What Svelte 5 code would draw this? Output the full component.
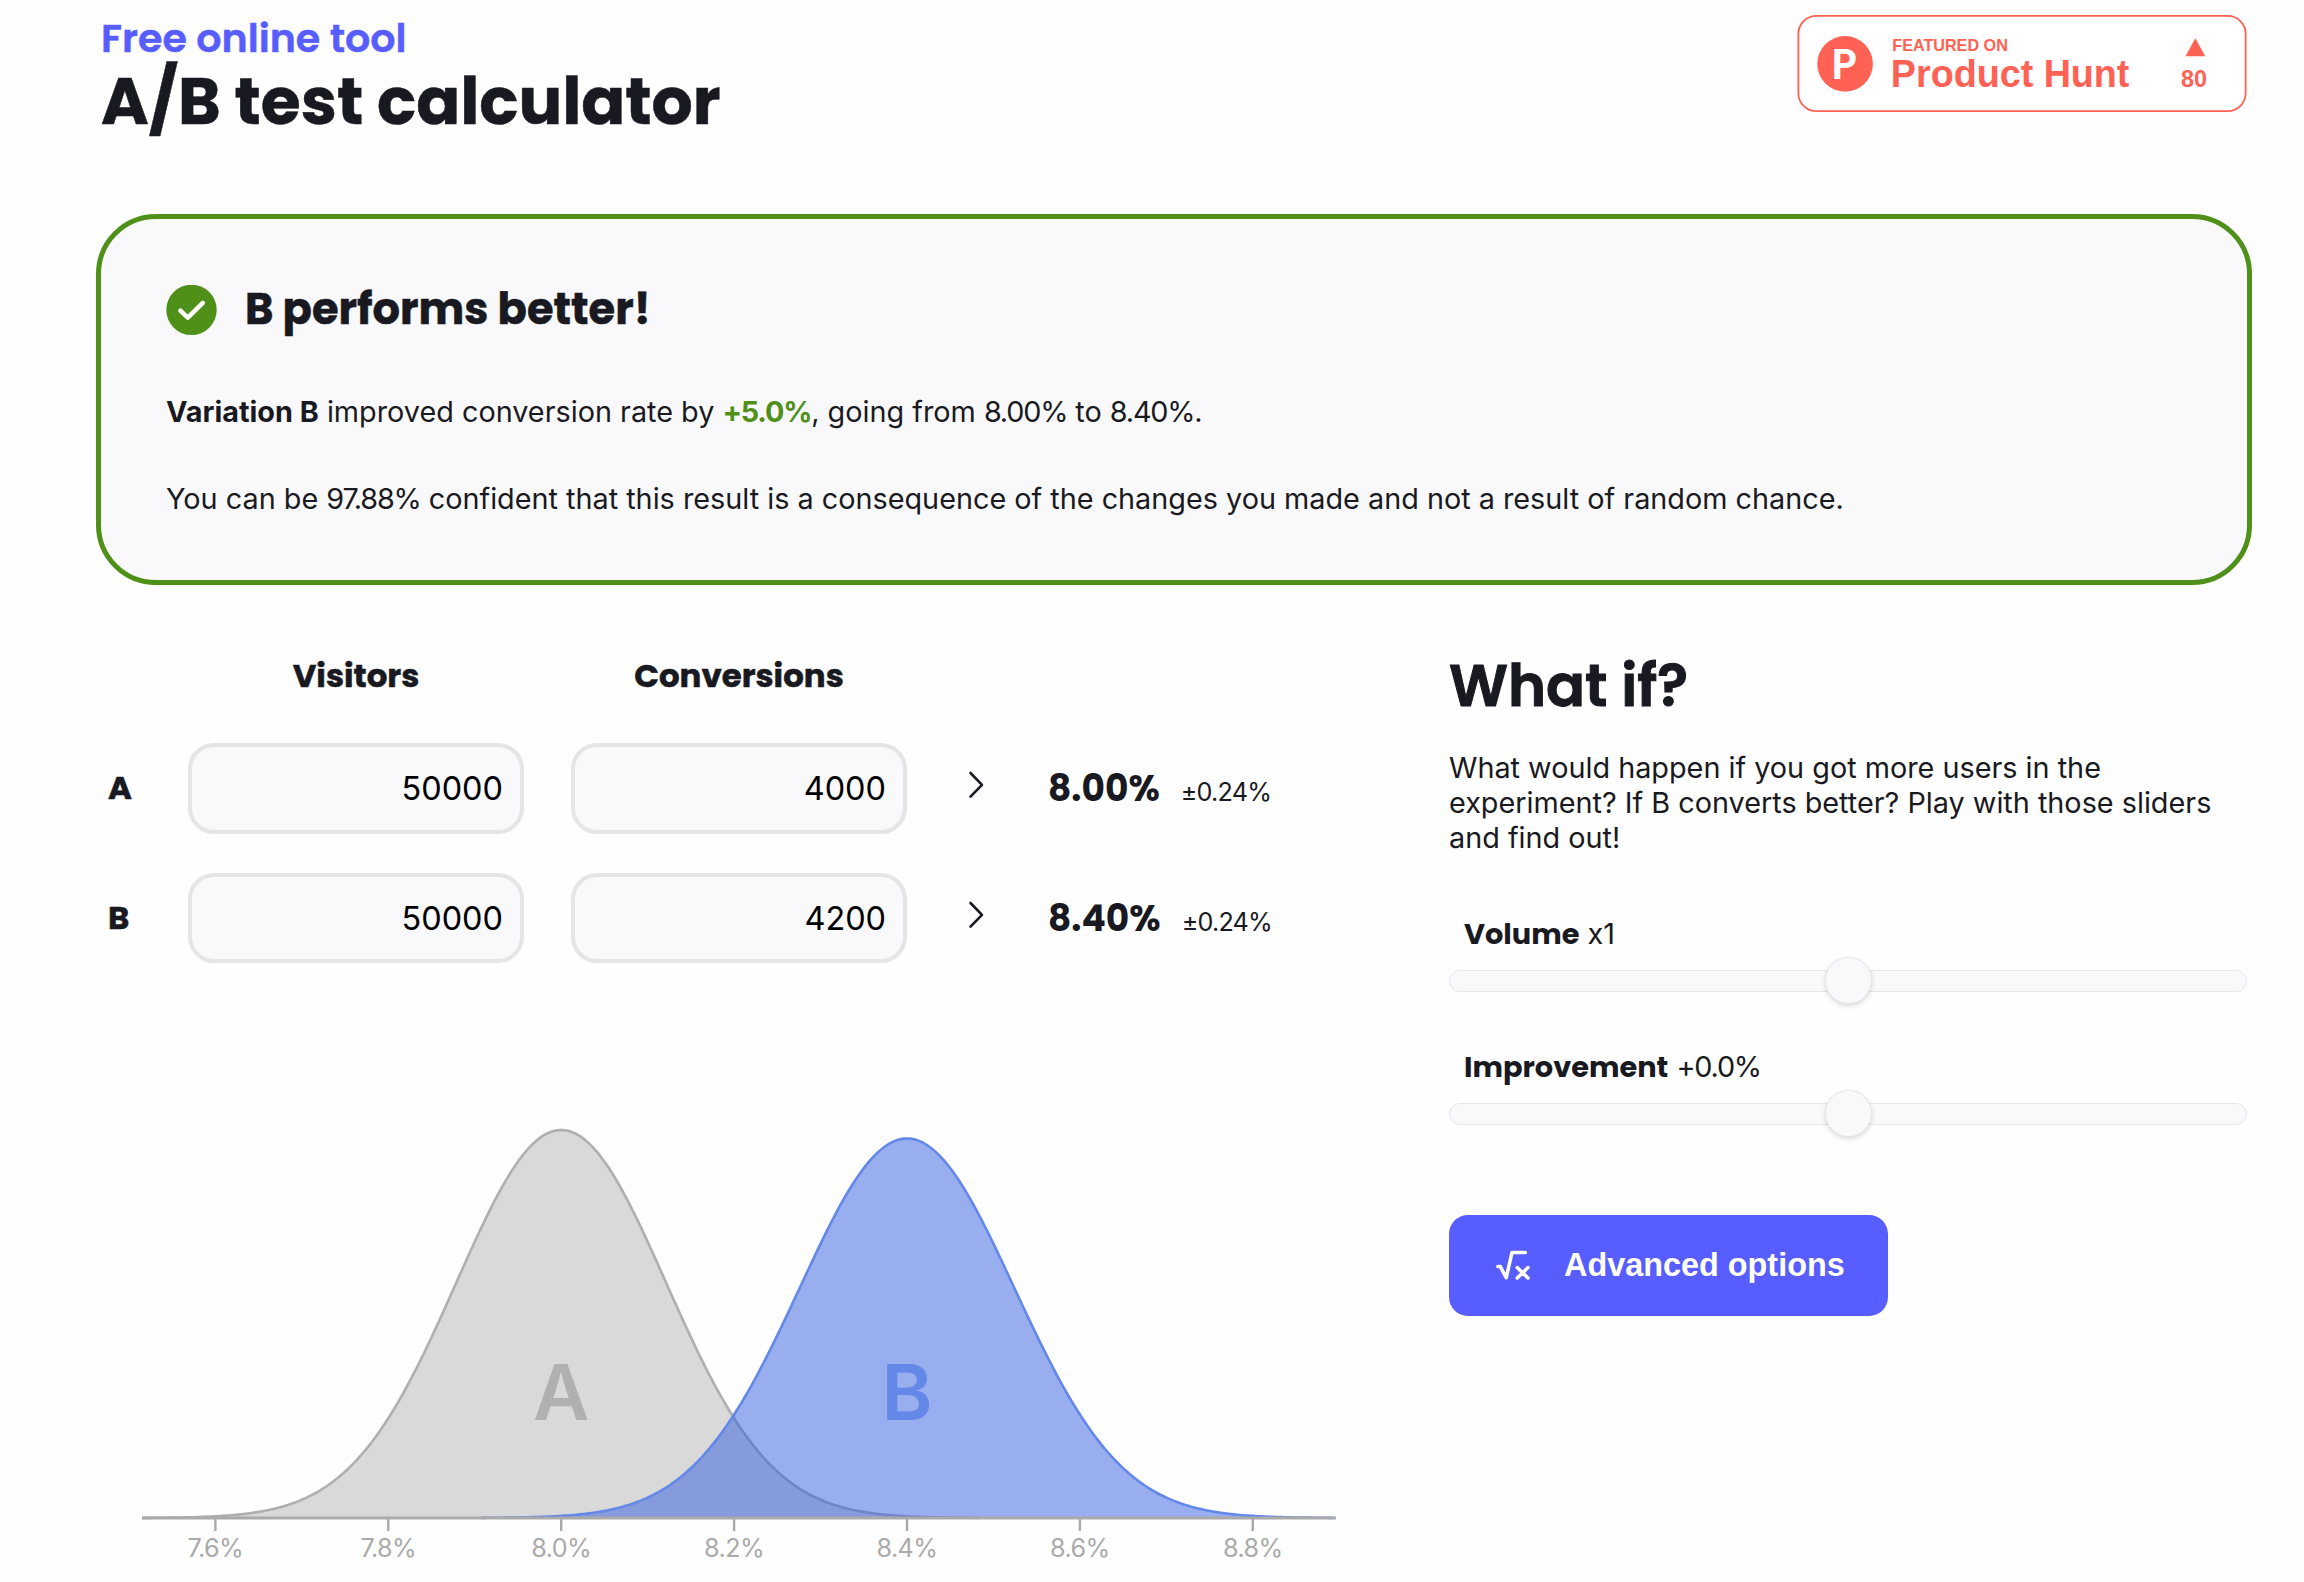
<svelte:head>
	<title>A/B test calculator</title>
</svelte:head>

<script>
let rows = $state([
	{ name: "A", visitors: 50000, conversions: 4000 },
	{ name: "B", visitors: 50000, conversions: 4200 },
]);

let volume = $state(0);
let improvement = $state(0);

const CHART_W = 1260;
const CHART_H = 464;
const BASE_Y = 408;
const PEAK = 388;
const X_FROM = 41;
const X_TO = 1235;
const TICKS = [7.6, 7.8, 8.0, 8.2, 8.4, 8.6, 8.8];

let stats = $derived(rows.map((r) => {
	let p = r.conversions / r.visitors;
	let se = Math.sqrt(p * (1 - p) / r.visitors);
	return { name: r.name, rate: p * 100, se: se * 100 };
}));
let uplift = $derived((stats[1].rate / stats[0].rate - 1) * 100);

// percent -> svg x
function sx(rate) {
	return 460.2 + (rate - 8) * 864.5;
}

function curve(s) {
	let h = PEAK * stats[0].se / s.se;
	let points = [];
	for (let x = X_FROM; x <= X_TO; x += 3) {
		let z = (x - sx(s.rate)) / (s.se * 864.5);
		if (Math.abs(z) > 4) continue;
		points.push(x + "," + (BASE_Y - h * Math.exp(-z * z / 2)).toFixed(2));
	}
	return "M" + points.join("L");
}
</script>

<div class="page">
	<header>
		<div class="titles">
			<div class="kicker">Free online tool</div>
			<h1>A/B test calculator</h1>
		</div>
		<svg class="badge" width="450" height="97" viewBox="0 0 250 54">
			<rect x="0.5" y="0.5" width="249" height="53" rx="10" fill="#fff" stroke="#ff6154" />
			<circle cx="26.5" cy="27.2" r="15.5" fill="#ff6154" />
			<text class="ph-p" x="18.9" y="35.7">P</text>
			<text class="ph-small" x="52.8" y="20" textLength="64.3">FEATURED ON</text>
			<text class="ph-name" x="52" y="40.2" textLength="132.8" lengthAdjust="spacingAndGlyphs">Product Hunt</text>
			<polygon points="227,23 216,23 221.5,12.9" fill="#ff6154" />
			<text class="ph-count" x="220.7" y="40.2" text-anchor="middle">80</text>
		</svg>
	</header>

	<section class="result">
		<div class="result-title">
			<svg width="51" height="51" viewBox="0 0 51 51">
				<circle cx="25.5" cy="24.9" r="25.2" fill="#4f9019" />
				<path d="M14.4 25.6L21.8 32.7L36.8 17.8" fill="none" stroke="#fff" stroke-width="4.5" stroke-linecap="round" stroke-linejoin="round" />
			</svg>
			<h2>B performs better!</h2>
		</div>
		<p><b>Variation B</b> improved conversion rate by <b class="green num">+{uplift.toFixed(1)}%</b>, going from <span class="num">{stats[0].rate.toFixed(2)}%</span> to <span class="num">{stats[1].rate.toFixed(2)}%</span>.</p>
		<p>You can be <span class="num">97.88%</span> confident that this result is a consequence of the changes you made and not a result of random chance.</p>
	</section>

	<div class="columns">
		<div class="left">
			<div class="table">
				<div class="head head-visitors">Visitors</div>
				<div class="head head-conversions">Conversions</div>
				{#each rows as row, i}
					<div class="name">{row.name}</div>
					<input class="field" type="text" aria-label="Visitors {row.name}" bind:value={row.visitors}>
					<input class="field" type="text" aria-label="Conversions {row.name}" bind:value={row.conversions}>
					<svg class="chevron" width="20" height="30" viewBox="0 0 20 30">
						<path d="M3.5 3L15 14.8L3.5 26.6" fill="none" stroke="#191921" stroke-width="2.6" stroke-linecap="round" stroke-linejoin="round" />
					</svg>
					<div class="rate">
						<b>{stats[i].rate.toFixed(2)}%</b>
						<span class="num">±{(stats[i].se * 1.96).toFixed(2)}%</span>
					</div>
				{/each}
			</div>

			<svg class="chart" width={CHART_W} height={CHART_H} viewBox="0 0 {CHART_W} {CHART_H}">
				<path class="area-a" d="{curve(stats[0])}Z" />
				<path class="line-a" d={curve(stats[0])} />
				<text class="letter letter-a" x={sx(stats[0].rate)} y="310">A</text>
				<path class="area-b" d="{curve(stats[1])}Z" />
				<path class="line-b" d={curve(stats[1])} />
				<text class="letter letter-b" x={sx(stats[1].rate)} y="310">B</text>
				<line class="axis" x1={X_FROM} x2={X_TO} y1={BASE_Y} y2={BASE_Y} />
				{#each TICKS as t}
					<line class="mark" x1={sx(t)} x2={sx(t)} y1={BASE_Y} y2={BASE_Y + 13} />
					<text class="tick" x={sx(t)} y="447">{t.toFixed(1)}%</text>
				{/each}
			</svg>
		</div>

		<div class="right">
			<h2 class="whatif">What if?</h2>
			<p class="intro">What would happen if you got more users in the experiment? If B converts better? Play with those sliders and find out!</p>
			<div class="slider">
				<label for="volume"><b>Volume</b> x{Math.pow(10, volume)}</label>
				<input id="volume" type="range" min="-1" max="1" step="0.1" bind:value={volume}>
			</div>
			<div class="slider">
				<label for="improvement"><b>Improvement</b> <span class="num">+{improvement.toFixed(1)}%</span></label>
				<input id="improvement" type="range" min="-10" max="10" step="0.1" bind:value={improvement}>
			</div>
			<button>
				<svg width="36" height="32" viewBox="0 0 36 32">
					<path d="M2.8 17.6H5.4L11.2 28.8L17 3.4H30.4M22.2 18.6L33 29M33 18.6L22.2 29" fill="none" stroke="#fff" stroke-width="3.5" stroke-linecap="round" stroke-linejoin="round" />
				</svg>
				<span>Advanced options</span>
			</button>
		</div>
	</div>
</div>

<style>
	:global(body) {
		background: #fff;
	}
	.page {
		box-sizing: border-box;
		width: 2304px;
		height: 1582px;
		overflow: hidden;
		background: #fefefe;
		color: #191921;
		font-family: Inter, "Helvetica Neue", Arial, sans-serif;
		font-size: 28.8px;
		line-height: 34.85px;
	}
	h1, h2, p {
		margin: 0;
	}
	h1, h2, .kicker, .head, .name, .rate b, label b {
		font-family: Poppins, Inter, sans-serif;
	}
	h1, h2, .kicker, .head, .name {
		-webkit-text-stroke: 0.5px;
	}
	.num {
		letter-spacing: -1.2px;
	}
	header {
		display: flex;
		justify-content: space-between;
		align-items: flex-start;
		height: 214px;
		padding: 0 57px 0 101px;
		box-sizing: border-box;
	}
	.titles {
		padding-top: 16px;
	}
	.kicker {
		color: #585dff;
		font-size: 39.6px;
		font-weight: 600;
		line-height: 44px;
	}
	h1 {
		margin-top: 5px;
		font-size: 64.8px;
		font-weight: 700;
		line-height: 73px;
	}
	.badge {
		margin-top: 15px;
	}
	.badge text {
		font-family: Helvetica, "Liberation Sans", Arial, sans-serif;
		font-weight: bold;
		fill: #ff6154;
	}
	.badge .ph-p {
		font-family: Poppins, Inter, sans-serif;
		font-size: 23.3px;
		font-weight: 600;
		fill: #fff;
	}
	.ph-small {
		font-size: 9px;
	}
	.ph-name {
		font-size: 22px;
	}
	.ph-count {
		font-size: 13px;
	}
	.result {
		box-sizing: border-box;
		height: 371px;
		margin: 0 52px 0 96px;
		padding: 66px 65px;
		border: 5px solid #4f9019;
		border-radius: 60px;
		background: #f9f9fc;
	}
	.result-title {
		display: flex;
		gap: 28px;
		margin-bottom: 59px;
	}
	.result-title h2 {
		margin-top: -1px;
		font-size: 43.2px;
		line-height: 50px;
	}
	.result p + p {
		margin-top: 52px;
	}
	.green {
		color: #4f9019;
	}
	.columns {
		display: flex;
		justify-content: space-between;
		padding: 0 57px 0 101px;
	}
	.left {
		padding-top: 71px;
	}
	.table {
		display: grid;
		grid-template-columns: 40px 336px 336px 47px auto;
		column-gap: 47px;
		row-gap: 39px;
		align-items: center;
	}
	.head {
		margin-bottom: 8px;
		font-size: 32.4px;
		font-weight: 700;
		line-height: 40px;
		text-align: center;
	}
	.head-visitors {
		grid-column: 2;
	}
	.head-conversions {
		grid-column: 3 / span 1;
	}
	.name {
		grid-column: 1;
		padding: 1px 0 0 7px;
		font-size: 32.4px;
		font-weight: 700;
	}
	.field {
		box-sizing: border-box;
		width: 336px;
		height: 90.5px;
		padding: 1px 17px 0;
		border: 4px solid #e5e5e5;
		border-radius: 26px;
		background: #f9f9fc;
		color: #000;
		font-family: inherit;
		font-size: 32.4px;
		text-align: right;
	}
	.chevron {
		margin: -6px 0 0 13px;
	}
	.rate {
		display: flex;
		gap: 21px;
		align-items: baseline;
		padding-top: 6px;
		white-space: nowrap;
	}
	.rate b {
		font-size: 36px;
	}
	.rate span {
		font-size: 25.2px;
		letter-spacing: -0.8px;
	}
	.chart {
		display: block;
		margin-top: 147px;
	}
	.area-a {
		fill: #d9d9d9;
	}
	.line-a {
		fill: none;
		stroke: #afafaf;
		stroke-width: 2.6;
	}
	.area-b {
		fill: rgba(40, 86, 221, 0.474);
	}
	.line-b {
		fill: none;
		stroke: #6488e8;
		stroke-width: 2.6;
	}
	.letter {
		font-size: 77.5px;
		font-weight: 600;
		text-anchor: middle;
	}
	.letter-a {
		fill: #b0b0b0;
	}
	.letter-b {
		fill: #6488e8;
	}
	.axis {
		stroke: #aaa;
		stroke-width: 3;
	}
	.mark {
		stroke: #aaa;
		stroke-width: 2.4;
	}
	.tick {
		fill: #aaa;
		font-size: 25.2px;
		letter-spacing: -0.6px;
		text-anchor: middle;
	}
	.right {
		width: 798px;
		padding-top: 68px;
	}
	.whatif {
		font-size: 57.6px;
		font-weight: 600;
		line-height: 66px;
		-webkit-text-stroke: 1px;
	}
	.intro {
		margin: 32px 0 61px;
	}
	.slider {
		height: 133px;
	}
	.slider label {
		display: block;
		padding-left: 15px;
	}
	.slider input {
		display: block;
		appearance: none;
		width: 100%;
		height: 47px;
		margin: 6px 0 0;
		background: none;
	}
	.slider input::-webkit-slider-runnable-track {
		box-sizing: border-box;
		height: 22px;
		border: 1.8px solid #e7e7ea;
		border-radius: 11px;
		background: #f9f9fc;
	}
	.slider input::-webkit-slider-thumb {
		appearance: none;
		box-sizing: border-box;
		width: 47px;
		height: 47px;
		margin-top: -13.5px;
		border: 1px solid #e7e7ea;
		border-radius: 50%;
		background: #f9f9fc;
		box-shadow: 0 2px 5px rgba(0, 0, 0, 0.14);
	}
	button {
		display: flex;
		align-items: center;
		width: 439px;
		height: 101px;
		margin-top: 32px;
		padding: 0 0 0 46px;
		border: 0;
		border-radius: 19px;
		background: #585dff;
		color: #fff;
		font-family: "Liberation Sans", Arial, sans-serif;
		font-size: 32.4px;
		font-weight: bold;
	}
	button span {
		margin-left: 33px;
	}
</style>
